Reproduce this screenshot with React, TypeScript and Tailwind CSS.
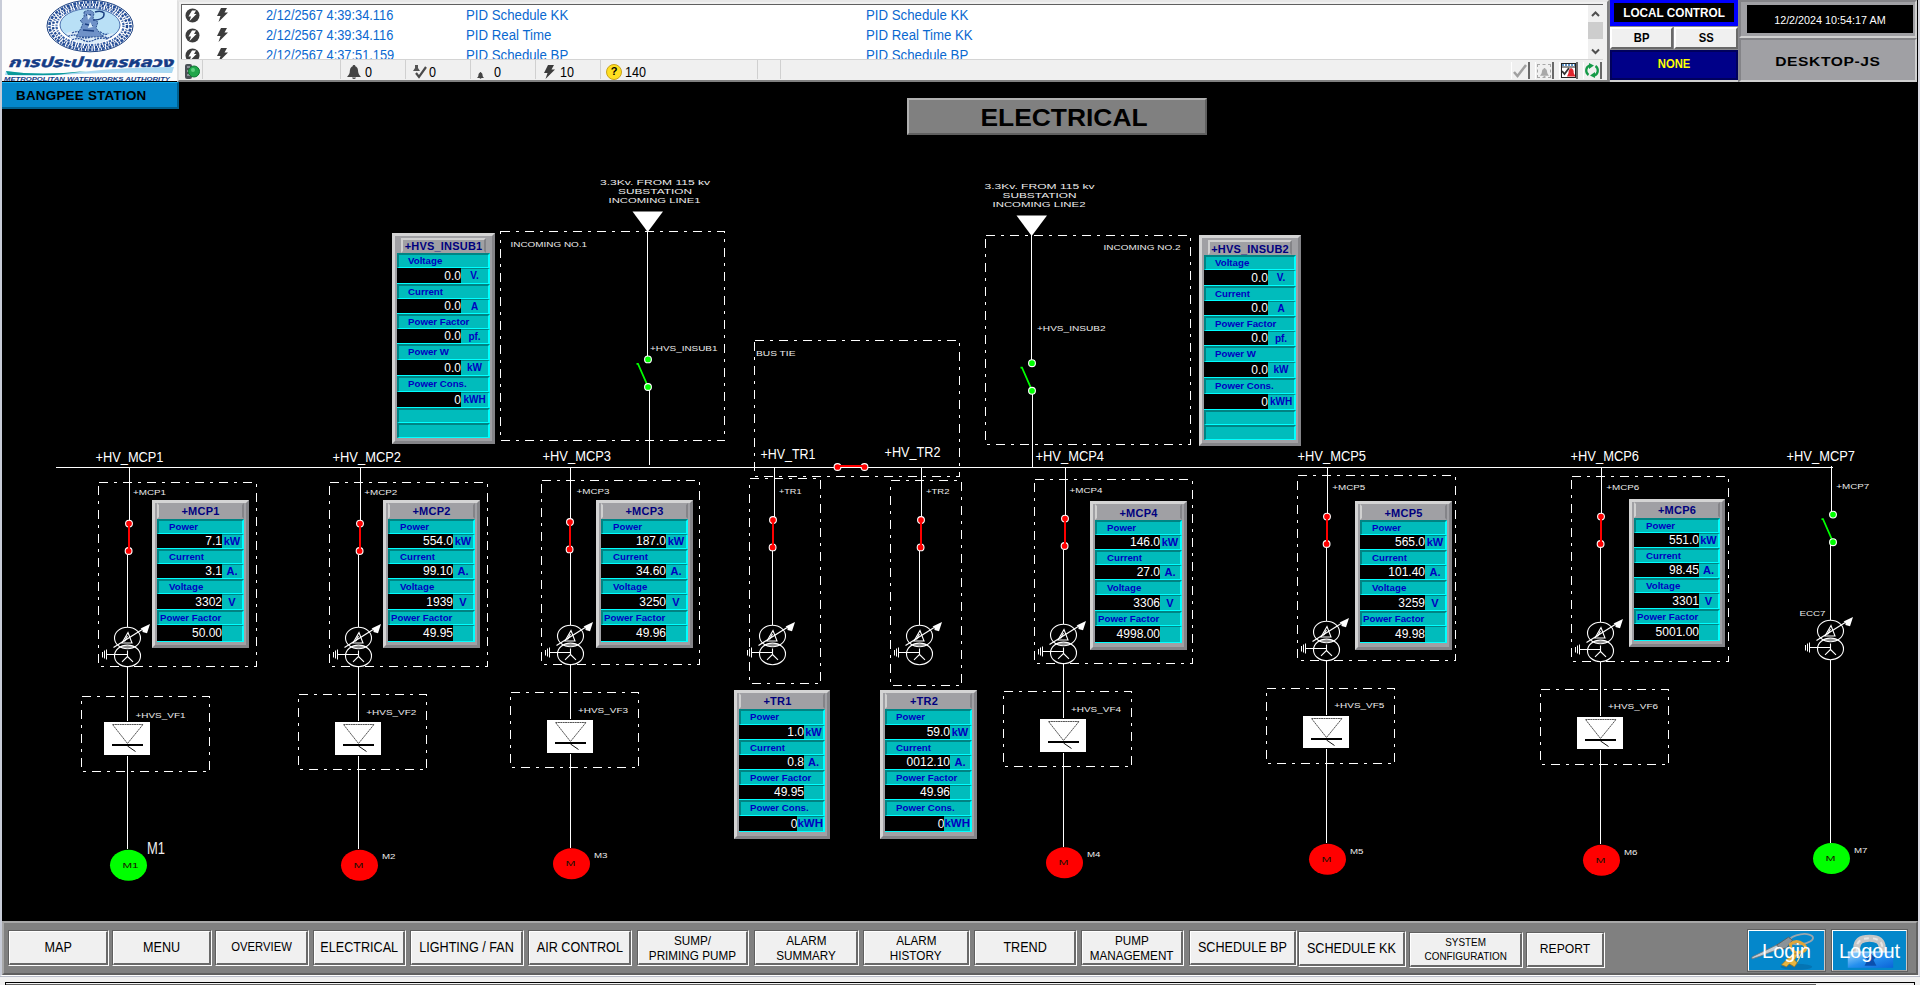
import React from "react";

/* ---------- shared drawing helpers (schematic coordinates) ---------- */

type LabelProps = { x: number; y: number; w: number; size?: number; fill?: string; children: string };

function Label({ x, y, w, size = 7, fill = "#ececec", children }: LabelProps) {
  return (
    <text x={x} y={y} fontSize={size} fill={fill} textLength={w} lengthAdjust="spacingAndGlyphs">
      {children}
    </text>
  );
}

function DashBox({ l, t, r, b }: { l: number; t: number; r: number; b: number }) {
  return (
    <rect
      x={l}
      y={t}
      width={r - l}
      height={b - t}
      fill="none"
      stroke="#fff"
      strokeDasharray="9 6 3 6"
      shapeRendering="crispEdges"
    />
  );
}

function VLine({ x, y1, y2 }: { x: number; y1: number; y2: number }) {
  return <line x1={x} x2={x} y1={y1} y2={y2} stroke="#fff" shapeRendering="crispEdges" />;
}

function Contact({ x, y, color }: { x: number; y: number; color: string }) {
  return <circle cx={x} cy={y} r={3.4} fill={color} stroke="#fff" strokeWidth={1.1} />;
}

function ClosedSwitch({ x, y }: { x: number; y: number }) {
  return (
    <g>
      <Contact x={x} y={y} color="#f00" />
      <Contact x={x - 0.4} y={y + 27.4} color="#f00" />
      <line x1={x} x2={x} y1={y} y2={y + 27} stroke="#f00" strokeWidth={2} shapeRendering="crispEdges" />
    </g>
  );
}

function OpenSwitch({ x, y }: { x: number; y: number }) {
  return (
    <g>
      <path d={`M${x - 11.5} ${y + 4.5}h1.5L${x - 1} ${y + 25}`} fill="none" stroke="#0f0" strokeWidth={1.7} />
      <Contact x={x} y={y} color="#0f0" />
      <Contact x={x} y={y + 27.6} color="#0f0" />
    </g>
  );
}

function Transformer({ x, dy }: { x: number; dy: number }) {
  return (
    <g transform={`translate(${x - 127.5} ${dy})`} fill="none" stroke="#fff" strokeWidth={1.1}>
      <ellipse cx="127.5" cy="638" rx="13" ry="10.8" />
      <ellipse cx="127.5" cy="655.9" rx="13" ry="10.8" />
      <path d="M128 632.5l-6 10.500h10zM127.5 636l-3 5.500" />
      <path d="M113.5 647.5L143 629" strokeWidth={1.2} />
      <path d="M150 624l-9.500 4.500 2 1 0 2.500 4.500 1.300z" fill="#fff" stroke="none" />
      <path d="M121 647h13" />
      <path d="M106.500 654.500H127.500M106.500 649.500v10M104.500 650.500v8M102.500 652v5.500" strokeWidth={1} />
      <path d="M127.500 650.500v6l-5.500 5.300M127.500 656.500l5.500 5.300" />
    </g>
  );
}

function Thyristor({ x, y, h = 33 }: { x: number; y: number; h?: number }) {
  return (
    <g>
      <rect x={x - 23.5} y={y} width={46} height={h} fill="#fff" />
      <path d={`M${x - 15} ${y + 2.5}h30.500L${x} ${y + 21.500}z`} fill="none" stroke="#555" strokeWidth={1} strokeDasharray="2 0.4" />
      <rect x={x - 15.5} y={y + 22} width={31} height={2} fill="#000" />
      <path d={`M${x} ${y + 24}l8 5.500`} stroke="#111" strokeWidth={1} />
    </g>
  );
}

function Motor({ x, y, color, name }: { x: number; y: number; color: string; name: string }) {
  const w = name.length > 1 ? 16 : 10;
  return (
    <g>
      <ellipse cx={x} cy={y} rx={18.5} ry={15.5} fill={color} />
      <Label x={x - 6} y={y + 2.7} w={w} size={8} fill="#1a1000">
        {name}
      </Label>
    </g>
  );
}

/* ---------- feeder columns ---------- */

type Feeder = {
  top: number;
  sw: [number, number];
  tx: number;
  dy: number;
  box: [number, number, number, number];
  vf: [number, number, number, number];
  drive: number;
  driveH: number;
  motor: [number, number, string, string];
  mcp: [number, number, string];
  vfl: [number, number, string];
};

const feeders: Feeder[] = [
  { top: 129.5, sw: [129, 523.6], tx: 127.5, dy: 0, box: [98.5, 482.5, 256.5, 666.5], vf: [81.5, 696.5, 209.5, 771.5], drive: 722, driveH: 33, motor: [128.5, 865.3, "#0f0", "M1"], mcp: [133, 495.3, "+MCP1"], vfl: [135.5, 718.3, "+HVS_VF1"] },
  { top: 360.5, sw: [360, 523.6], tx: 358.5, dy: 0, box: [329.5, 482.5, 487.5, 666.5], vf: [298.5, 694.5, 426.5, 769.5], drive: 722, driveH: 33, motor: [359.5, 865.3, "#f00", "M"], mcp: [364.3, 495.3, "+MCP2"], vfl: [366.3, 714.5, "+HVS_VF2"] },
  { top: 570.5, sw: [570, 522], tx: 570.5, dy: -2, box: [541.5, 480.5, 699.5, 664.5], vf: [510.5, 692.5, 638.5, 767.5], drive: 720, driveH: 33, motor: [571.5, 863.7, "#f00", "M"], mcp: [576.5, 493.5, "+MCP3"], vfl: [578, 712.5, "+HVS_VF3"] },
  { top: 1065.5, sw: [1065, 518.6], tx: 1063.5, dy: -3, box: [1034.5, 479.5, 1192.5, 663.5], vf: [1003.5, 691.5, 1131.5, 766.5], drive: 719, driveH: 33, motor: [1064.5, 862.7, "#f00", "M"], mcp: [1069.5, 492.5, "+MCP4"], vfl: [1071, 711.5, "+HVS_VF4"] },
  { top: 1327.5, sw: [1327, 516.6], tx: 1326.5, dy: -6, box: [1297.5, 475.5, 1455.5, 660.5], vf: [1266.5, 688.5, 1394.5, 763.5], drive: 716, driveH: 32, motor: [1327.5, 859.3, "#f00", "M"], mcp: [1332.3, 489.5, "+MCP5"], vfl: [1334.3, 707.5, "+HVS_VF5"] },
  { top: 1601.5, sw: [1601, 516.6], tx: 1600.5, dy: -5, box: [1571.5, 476.5, 1728.5, 661.5], vf: [1540.5, 689.5, 1668.5, 764.5], drive: 717, driveH: 32, motor: [1601.5, 860.3, "#f00", "M"], mcp: [1606.3, 489.5, "+MCP6"], vfl: [1608, 708.5, "+HVS_VF6"] },
];

function FeederColumn({ f }: { f: Feeder }) {
  return (
    <g>
      <DashBox l={f.box[0]} t={f.box[1]} r={f.box[2]} b={f.box[3]} />
      <DashBox l={f.vf[0]} t={f.vf[1]} r={f.vf[2]} b={f.vf[3]} />
      <VLine x={f.top} y1={468} y2={f.sw[1]} />
      <VLine x={f.tx} y1={f.sw[1] + 31} y2={627 + f.dy} />
      <VLine x={f.tx} y1={667 + f.dy} y2={f.drive - 1} />
      <VLine x={f.tx} y1={f.drive + f.driveH + 1} y2={f.motor[1] - 16} />
      <ClosedSwitch x={f.sw[0]} y={f.sw[1]} />
      <Transformer x={f.tx} dy={f.dy} />
      <Thyristor x={f.tx} y={f.drive} h={f.driveH} />
      <Motor x={f.motor[0]} y={f.motor[1]} color={f.motor[2]} name={f.motor[3]} />
      <Label x={f.mcp[0]} y={f.mcp[1]} w={33}>{f.mcp[2]}</Label>
      <Label x={f.vfl[0]} y={f.vfl[1]} w={50}>{f.vfl[2]}</Label>
    </g>
  );
}

function Schematic() {
  return (
    <svg viewBox="0 82 1920 839" width={1920} height={839} className="block" fontFamily="'Liberation Sans', Arial, sans-serif">
      <line x1={56} x2={1833} y1={467.5} y2={467.5} stroke="#fff" shapeRendering="crispEdges" />

      {/* incoming 1 */}
      <Label x={600} y={185} w={110}>3.3Kv. FROM 115 kv</Label>
      <Label x={618} y={194} w={74}>SUBSTATION</Label>
      <Label x={608.5} y={203} w={92}>INCOMING LINE1</Label>
      <DashBox l={500.5} t={231.5} r={724.5} b={440.5} />
      <path d="M632.500 211.500h30.500L647.700 232z" fill="#fff" />
      <Label x={510.5} y={247} w={76.5}>INCOMING NO.1</Label>
      <VLine x={647.5} y1={231} y2={357} />
      <VLine x={649.5} y1={389} y2={465} />
      <OpenSwitch x={648} y={359.4} />
      <Label x={650} y={351} w={67.5}>+HVS_INSUB1</Label>

      {/* incoming 2 */}
      <Label x={984.5} y={189} w={110}>3.3Kv. FROM 115 kv</Label>
      <Label x={1002.5} y={198} w={74}>SUBSTATION</Label>
      <Label x={992.5} y={207} w={93}>INCOMING LINE2</Label>
      <DashBox l={985.5} t={235.5} r={1190.5} b={444.5} />
      <path d="M1016.500 215.500h30.500L1031.700 236z" fill="#fff" />
      <Label x={1103.5} y={250} w={77}>INCOMING NO.2</Label>
      <VLine x={1031.5} y1={235} y2={360} />
      <VLine x={1032.5} y1={393} y2={467} />
      <OpenSwitch x={1032} y={363.2} />
      <Label x={1037} y={331} w={68.5}>+HVS_INSUB2</Label>

      {/* bus tie */}
      <DashBox l={754.5} t={340.5} r={959.5} b={476.5} />
      <Label x={756} y={355.7} w={39.5}>BUS TIE</Label>
      <Contact x={837.5} y={467} color="#f00" />
      <Contact x={864.5} y={467} color="#f00" />
      <rect x={836} y={465} width={29} height={2} fill="#f00" />

      {/* TR1 / TR2 */}
      <DashBox l={749.5} t={478.5} r={820.5} b={683.5} />
      <DashBox l={890.5} t={480.5} r={961.5} b={685.5} />
      <VLine x={774.5} y1={468} y2={520} />
      <VLine x={772.5} y1={551} y2={625} />
      <VLine x={921.5} y1={468} y2={520} />
      <VLine x={919.5} y1={551} y2={625} />
      <ClosedSwitch x={773} y={520} />
      <ClosedSwitch x={921} y={520} />
      <Transformer x={772.5} dy={-2} />
      <Transformer x={919.5} dy={-2} />
      <Label x={779} y={493.6} w={22.5}>+TR1</Label>
      <Label x={926} y={493.6} w={23.5}>+TR2</Label>

      {feeders.map((f) => (
        <FeederColumn key={f.mcp[2]} f={f} />
      ))}

      {/* feeder 7 */}
      <VLine x={1831.5} y1={466} y2={512} />
      <VLine x={1830.5} y1={545} y2={620} />
      <VLine x={1830.5} y1={660} y2={843} />
      <OpenSwitch x={1833} y={514.6} />
      <Transformer x={1830.5} dy={-7} />
      <Motor x={1831.5} y={858.5} color="#0f0" name="M" />
      <Label x={1799.5} y={615.7} w={26}>ECC7</Label>
      <Label x={1836.3} y={488.7} w={33}>+MCP7</Label>

      {/* bus labels */}
      <Label x={95.5} y={462} w={68} size={14} fill="#fff">+HV_MCP1</Label>
      <Label x={332.5} y={462} w={68.5} size={14} fill="#fff">+HV_MCP2</Label>
      <Label x={542.5} y={461} w={68.5} size={14} fill="#fff">+HV_MCP3</Label>
      <Label x={760.5} y={459} w={55} size={14} fill="#fff">+HV_TR1</Label>
      <Label x={884.5} y={457} w={56} size={14} fill="#fff">+HV_TR2</Label>
      <Label x={1035.5} y={461} w={68.5} size={14} fill="#fff">+HV_MCP4</Label>
      <Label x={1297.5} y={461} w={68.5} size={14} fill="#fff">+HV_MCP5</Label>
      <Label x={1570.5} y={461} w={68.5} size={14} fill="#fff">+HV_MCP6</Label>
      <Label x={1786.5} y={461} w={68.5} size={14} fill="#fff">+HV_MCP7</Label>

      {/* motor labels */}
      <Label x={147} y={854} w={18} size={16} fill="#eee">M1</Label>
      <Label x={382} y={859.3} w={13.5}>M2</Label>
      <Label x={594} y={857.5} w={13.5}>M3</Label>
      <Label x={1087} y={856.5} w={13.5}>M4</Label>
      <Label x={1350} y={853.5} w={13.5}>M5</Label>
      <Label x={1624} y={854.5} w={13.5}>M6</Label>
      <Label x={1854} y={852.6} w={13.5}>M7</Label>
    </svg>
  );
}

/* ---------- meter panels ---------- */

type Row = { label: string; value: string; unit: string; indent?: string; lh: string; vh: string };

function Meter({ place, title, rows, wide, titlePad = "pt-0", blanks = 0 }: { place: string; title: string; rows: Row[]; wide?: boolean; titlePad?: string; blanks?: number }) {
  return (
    <section className={`absolute flex flex-col border-[3px] border-t-[#d4d4d4] border-l-[#d4d4d4] border-r-[#848488] border-b-[#848488] bg-[#a0a0a4] ${wide ? "px-[2px] pt-[2px]" : "px-[2px]"} ${place}`}>
      <h2
        className={`flex shrink-0 items-center justify-center whitespace-nowrap border-2 border-l-[#d0d0d0] border-r-[#848488] border-b-transparent text-[11px] font-bold leading-none text-[#00007e] tracking-[0.2px] ${
          wide ? "mx-1 h-[15px] border-t-[#d0d0d0]" : "h-4 border-t-transparent"
        } ${titlePad}`}
      >
        {title}
      </h2>
      {rows.map((r) => (
        <div key={r.label} className="shrink-0">
          <div className={`flex items-center whitespace-nowrap border-t-2 border-r-2 border-b border-l-2 border-t-[#008484] border-l-[#008484] border-r-[#0ff] border-b-[#0ff] bg-[#00bcbc] pb-[1px] text-[9.7px] font-bold leading-none text-[#0000c0] ${r.lh} ${r.indent ?? "pl-[9px]"}`}>
            {r.label}
          </div>
          <div className={`flex border-b border-b-[#0ff] ${r.vh}`}>
            <div className={`flex items-center justify-end bg-black text-[12px] leading-none text-white ${wide ? "w-[64px]" : "w-[65px]"}`}>{r.value}</div>
            <div className={`flex flex-1 items-center whitespace-nowrap border-t border-r-2 border-t-[#008484] border-r-[#0ff] bg-[#00bcbc] font-bold leading-none text-[#0000c0] ${wide ? "justify-center text-[10px]" : r.unit === "kWH" ? "text-[11.5px]" : "justify-center text-[11px]"}`}>
              <span>{r.unit}</span>
            </div>
          </div>
        </div>
      ))}
      {Array.from({ length: blanks }, (_, i) => (
        <div key={i} className="h-[15px] shrink-0 border-t-2 border-r-2 border-b border-l-2 border-t-[#008484] border-l-[#008484] border-r-[#0ff] border-b-[#0ff] bg-[#00bcbc]" />
      ))}
    </section>
  );
}

const insubRows: Row[] = [
  { label: "Voltage", value: "0.0", unit: "V.", lh: "h-[15px]", vh: "h-4" },
  { label: "Current", value: "0.0", unit: "A", lh: "h-[15px]", vh: "h-[15px]" },
  { label: "Power Factor", value: "0.0", unit: "pf.", lh: "h-[15px]", vh: "h-[15px]" },
  { label: "Power W", value: "0.0", unit: "kW", lh: "h-4", vh: "h-4" },
  { label: "Power Cons.", value: "0", unit: "kWH", lh: "h-4", vh: "h-4" },
];

const mcpRows = (p: string, c: string, v: string, pf: string): Row[] => [
  { label: "Power", value: p, unit: "kW", lh: "h-[15px]", vh: "h-[15px]", indent: "pl-[10px]" },
  { label: "Current", value: c, unit: "A.", lh: "h-[15px]", vh: "h-[15px]", indent: "pl-[10px]" },
  { label: "Voltage", value: v, unit: "V", lh: "h-[15px]", vh: "h-4", indent: "pl-[10px]" },
  { label: "Power Factor", value: pf, unit: "", indent: "pl-[1px]", lh: "h-[15px]", vh: "h-[17px]" },
];

const trRows = (p: string, c: string, pf: string): Row[] => [
  { label: "Power", value: p, unit: "kW", lh: "h-4", vh: "h-[15px]" },
  { label: "Current", value: c, unit: "A.", lh: "h-[15px]", vh: "h-[15px]" },
  { label: "Power Factor", value: pf, unit: "", lh: "h-[15px]", vh: "h-[15px]" },
  { label: "Power Cons.", value: "0", unit: "kWH", lh: "h-4", vh: "h-4" },
];

/* ---------- header ---------- */

function Logo() {
  return (
    <svg width={175} height={81} viewBox="2 0 175 81" className="block bg-[#fdfdfd]">
      <ellipse cx="90" cy="26" rx="43" ry="25.800" fill="#fff" stroke="#1a3f80" strokeWidth="1" />
      <ellipse cx="90" cy="26" rx="40.500" ry="23.800" fill="none" stroke="#27509a" strokeWidth="2.600" strokeDasharray="1.600 1.200 3 0.900" />
      <ellipse cx="90" cy="26" rx="37" ry="21.300" fill="none" stroke="#1f4790" strokeWidth="2.400" strokeDasharray="2.200 1.400 1 1" />
      <ellipse cx="90" cy="26" rx="33.500" ry="19" fill="none" stroke="#3a62a8" strokeWidth="2.200" strokeDasharray="1.200 1.300 2.500 1" />
      <ellipse cx="90" cy="25" rx="30" ry="16.500" fill="#b9e0f6" stroke="#27509a" strokeWidth="0.800" />
      <path d="M66 33q12-4 24 0t24 0q-6 10-24 11-18-1-24-11z" fill="#dcecf8" />
      <path d="M72 33q6-3 10 0t10 0 10 0 6 0M68 36.500q6-3 12 0t12 0 12 0 8-1M72 40q6-3 11 0t11 0 14-1" fill="none" stroke="#27509a" strokeWidth="1.300" strokeDasharray="2 0.900" />
      <path d="M84 12q6-4 10 1l-1 6 5 3-2 6 7 9H76l5-9 2-5-3-2 4-4z" fill="#6f92c8" stroke="#1a3f80" strokeWidth="0.800" strokeDasharray="2 1" />
      <path d="M93 20q12 0 11-7-3-3-9-1M86 15h5M85 24l8 2M83 30l11 1" fill="none" stroke="#1a3f80" strokeWidth="1.400" />
      <path d="M87 14l4 2-3 4zM90 22l3 5-5 1z" fill="#d8ecfa" />
      <text x="8" y="66.500" fontSize="14" fontWeight="700" fontStyle="italic" fill="#143c86" stroke="#143c86" strokeWidth="0.400" fontFamily="'Noto Sans Thai', 'Noto Sans', 'Liberation Sans', sans-serif" textLength="165" lengthAdjust="spacingAndGlyphs">
        การประปานครหลวง
      </text>
      <path d="M6 71q30 5 75 1 45-5 93-5l-2 6q-60-1-95 1-40 3-72 1z" fill="#a9d8f2" />
      <path d="M6 71q34 5 80 0-20 3-32 4H8z" fill="#0a9a9a" />
      <text x="4" y="80.500" fontSize="6" fontWeight="700" fontStyle="italic" fill="#143c86" fontFamily="'Liberation Sans', Arial, sans-serif" textLength="166" lengthAdjust="spacingAndGlyphs">
        METROPOLITAN WATERWORKS AUTHORITY
      </text>
    </svg>
  );
}

const Bolt = ({ className = "" }: { className?: string }) => (
  <svg width={12} height={14} viewBox="0 0 12 14" className={className}>
    <path d="M5 0h6L8.500 4.500H12L2.500 14 4.500 8H1z" fill="#3c3c3c" />
  </svg>
);

const CircleBolt = () => (
  <svg width={15} height={15} viewBox="0 0 15 15">
    <circle cx="7.500" cy="7.500" r="7" fill="#3c3c3c" />
    <path d="M7 2.500h4L9 6h2.500L4.500 13 6 8.500H3.500z" fill="#fff" />
  </svg>
);

const Bell = ({ w, h, fill = "#444" }: { w: number; h: number; fill?: string }) => (
  <svg width={w} height={h} viewBox="0 0 14 14" preserveAspectRatio="none">
    <path d="M7 0c1 0 1.500.7 1.500 1.500C11 2.200 11 5 11.300 7.500 11.600 9.500 13 10.500 14 12H0c1-1.500 2.400-2.500 2.700-4.500C3 5 3 2.200 5.500 1.500 5.500.7 6 0 7 0zM5 12.500h4Q8.500 14 7 14T5 12.500z" fill={fill} />
  </svg>
);

function EventRow({ time, a, b }: { time: string; a: string; b: string }) {
  return (
    <div className="flex h-[20px] shrink-0 items-center text-[14px] leading-none text-[#0a68d0]">
      <span className="w-[32px] pl-[3px]"><CircleBolt /></span>
      <span className="w-[52px] pl-[2px]"><Bolt /></span>
      <span className="w-[200px] whitespace-nowrap"><span className="inline-block origin-left scale-x-[0.915]">{time}</span></span>
      <span className="w-[400px] whitespace-nowrap"><span className="inline-block origin-left scale-x-[0.945]">{a}</span></span>
      <span className="whitespace-nowrap"><span className="inline-block origin-left scale-x-[0.945]">{b}</span></span>
    </div>
  );
}

function StatusCell({ w, children }: { w: string; children?: React.ReactNode }) {
  return (
    <div className={`flex h-full items-center border-l border-l-[#d0d0d0] pt-[4px] text-[14px] leading-none text-black ${w}`}>
      {children}
    </div>
  );
}

const Count = ({ children }: { children: string }) => <span className="inline-block origin-left scale-x-90">{children}</span>;

function ToolIcon({ gap = "", children }: { gap?: string; children: React.ReactNode }) {
  return <div className={`mt-[2px] flex h-[17px] w-[19px] items-center justify-center border-r-2 border-r-[#696969] border-l border-l-white ${gap}`}>{children}</div>;
}

function EventViewer() {
  return (
    <div className="flex h-[82px] w-[1432px] flex-col border-2 border-t-[#e8e8e8] border-l-[#e0e0e0] border-r-[#808080] border-b-[#808080] bg-[#f0f0f0] pl-[2px] pr-[4px] pt-[2px]">
      <div className="flex h-[55px] border-t border-l border-t-[#606060] border-l-[#606060] bg-white">
        <div className="flex flex-1 flex-col overflow-hidden">
          <EventRow time="2/12/2567 4:39:34.116" a="PID Schedule KK" b="PID Schedule KK" />
          <EventRow time="2/12/2567 4:39:34.116" a="PID Real Time" b="PID Real Time KK" />
          <EventRow time="2/12/2567 4:37:51.159" a="PID Schedule BP" b="PID Schedule BP" />
        </div>
        <div className="flex w-[15px] flex-col items-center bg-[#f0f0f0]">
          <svg width={15} height={17} viewBox="0 0 15 17"><path d="M4 11l3.500-3.500L11 11" fill="none" stroke="#505050" strokeWidth={2} /></svg>
          <div className="h-[17px] w-full bg-[#cdcdcd]" />
          <svg width={15} height={18} viewBox="0 0 15 18" className="mt-[2px]"><path d="M4 8.500L7.500 12 11 8.500" fill="none" stroke="#505050" strokeWidth={2} /></svg>
        </div>
      </div>
      <div className="flex h-[20px] items-center border-t border-t-[#d4d4d4]">
        <div className="flex h-full w-[21px] items-center pl-[4px] pt-[3px]">
          <svg width={15} height={15} viewBox="0 0 15 15">
            <rect x="0" y="0" width="7" height="15" rx="2" fill="#4b5157" />
            <path d="M2 3h3M2 7h3M2 11h3" stroke="#8a9298" strokeWidth={2} />
            <circle cx="9" cy="7.500" r="5.500" fill="#1fa64a" stroke="#0c7a31" />
            <circle cx="8" cy="6" r="2" fill="#5fd07f" />
          </svg>
        </div>
        <StatusCell w="w-[138px]" />
        <StatusCell w="w-[65px] pl-[6px] gap-[4px]"><Bell w={14} h={14} /><Count>0</Count></StatusCell>
        <StatusCell w="w-[65px] pl-[6px] gap-[2px]">
          <svg width={15} height={14} viewBox="0 0 15 14"><path d="M3 0h3v3l2 3H1l2-3z" fill="#555" /><path d="M4 8l3 4 7-10" fill="none" stroke="#4a4a4a" strokeWidth={2.2} /></svg><Count>0</Count>
        </StatusCell>
        <StatusCell w="w-[65px] pl-[6px]"><span className="mr-[10px] self-end"><Bell w={7} h={7} /></span><Count>0</Count></StatusCell>
        <StatusCell w="w-[65px] pl-[7px] gap-[5px]"><Bolt /><Count>10</Count></StatusCell>
        <StatusCell w="w-[157px] pl-[5px] gap-[3px]">
          <span className="flex size-4 items-center justify-center rounded-full border border-[#c9a21a] bg-[#ffdf20] text-[11px] font-bold text-black">?</span><Count>140</Count>
        </StatusCell>
        <StatusCell w="w-[23px]" />
        <StatusCell w="flex-1" />
        <ToolIcon><svg width={14} height={14} viewBox="0 0 14 14"><path d="M1 8l3.500 4L13 1" fill="none" stroke="#a0a0a0" strokeWidth={2.5} /></svg></ToolIcon>
        <ToolIcon gap="ml-[5px]">
          <span className="flex size-[14px] items-end justify-center border border-dashed border-[#a8a8a8]"><Bell w={9} h={9} fill="#a8a8a8" /></span>
        </ToolIcon>
        <ToolIcon gap="ml-[5px]">
          <svg width={15} height={15} viewBox="0 0 15 15"><rect x=".5" y=".5" width="14" height="14" fill="#fff" stroke="#222" /><path d="M1 2h13" stroke="#2a6fb0" strokeWidth={1.5} strokeDasharray="2 1" /><path d="M0 4h15" stroke="#222" /><path d="M1 8l2.500 3L8 5" fill="none" stroke="#333" strokeWidth={1.8} /><path d="M10 5q3 1 2.700 5l1.800 3.500H6L7.500 10Q7.500 6 10 5z" fill="#e0242c" /></svg>
        </ToolIcon>
        <ToolIcon gap="ml-[5px] mr-[1px]">
          <svg width={16} height={15} viewBox="0 0 16 15"><path d="M4.500 12A5.500 5.500 0 0 1 5.500 2.500M11.500 3a5.500 5.500 0 0 1-1 9.500" fill="none" stroke="#159a48" strokeWidth={2.3} /><path d="M5 0l5 2.500L5 6zM11 9v6l-5-2.500z" fill="#159a48" /></svg>
        </ToolIcon>
      </div>
    </div>
  );
}

function ControlBlock() {
  return (
    <div className="flex h-[82px] w-[130px] flex-col bg-[#8a8a8e] px-[1px] text-[12.5px] font-bold leading-none">
      <div className="flex h-[26px] items-center justify-center border-4 border-t-[3px] border-[#0000ff] bg-black pt-[1px] text-white">
        <span className="scale-x-[0.94] whitespace-nowrap">LOCAL CONTROL</span>
      </div>
      <div className="mt-[1px] flex h-[22px] gap-[1px]">
        <div className="flex w-[63px] items-center justify-center border-2 border-t-white border-l-white border-r-[#696969] border-b-[#696969] bg-[#f0f0f0] pt-[1px] text-black"><span className="scale-x-90">BP</span></div>
        <div className="flex flex-1 items-center justify-center border-2 border-t-white border-l-white border-r-[#696969] border-b-[#696969] bg-[#f0f0f0] pt-[1px] text-black"><span className="scale-x-90">SS</span></div>
      </div>
      <div className="mt-[1px] flex h-[30px] items-center justify-center border-2 border-[#00005c] bg-[#000088] pb-[2px] text-[#ffff00]">
        <span className="scale-x-[0.9]">NONE</span>
      </div>
      <div className="h-[2px] bg-[#d0d0d0]" />
    </div>
  );
}

function ClockBlock() {
  return (
    <div className="flex h-[82px] w-[178px] flex-col bg-[#a0a0a4] leading-none">
      <div className="flex h-[38px] border-2 border-t-[#848488] border-l-[#848488] border-r-[#d0d0d0] border-b-[#d0d0d0] pl-[6px] pr-[2px] pt-[3px] pb-[3px]">
        <div className="flex flex-1 items-center justify-center bg-black text-[11px] text-white">
          <span className="scale-x-[0.98] whitespace-nowrap pt-[2px]">12/2/2024 10:54:17 AM</span>
        </div>
      </div>
      <div className="flex flex-1 items-center justify-center border-2 border-t-[#848488] border-l-[#848488] border-r-[#d0d0d0] border-b-[#d0d0d0] text-[13px] font-bold text-black">
        <span className="scale-x-[1.2] whitespace-nowrap pt-[2px] tracking-[0.5px]">DESKTOP-JS</span>
      </div>
    </div>
  );
}

/* ---------- footer ---------- */

type Nav = { lines: string[]; box: string; text?: string };

const nav: Nav[] = [
  { lines: ["MAP"], box: "w-[101px] h-9" },
  { lines: ["MENU"], box: "w-[100px] h-9 ml-[3px]" },
  { lines: ["OVERVIEW"], box: "w-[94px] h-9 ml-[3px]", text: "text-[12.5px] leading-none" },
  { lines: ["ELECTRICAL"], box: "w-[93px] h-9 ml-1" },
  { lines: ["LIGHTING / FAN"], box: "w-[114px] h-9 ml-1" },
  { lines: ["AIR CONTROL"], box: "w-[104px] h-9 ml-1" },
  { lines: ["SUMP/", "PRIMING PUMP"], box: "w-[112px] h-9 ml-[5px]", text: "text-[13px] leading-[15px]" },
  { lines: ["ALARM", "SUMMARY"], box: "w-[105px] h-9 ml-[5px]", text: "text-[13px] leading-[15px]" },
  { lines: ["ALARM", "HISTORY"], box: "w-[107px] h-9 ml-1", text: "text-[13px] leading-[15px]" },
  { lines: ["TREND"], box: "w-[103px] h-9 ml-1" },
  { lines: ["PUMP", "MANAGEMENT"], box: "w-[103px] h-9 ml-1", text: "text-[13px] leading-[15px]" },
  { lines: ["SCHEDULE BP"], box: "w-[108px] h-9 ml-[5px]" },
  { lines: ["SCHEDULE KK"], box: "w-[108px] h-9 ml-[1px] mt-[1px]" },
  { lines: ["SYSTEM", "CONFIGURATION"], box: "w-[114px] h-9 ml-[3px] mt-[2px]", text: "text-[11px] leading-[14px] pb-[1px]" },
  { lines: ["REPORT"], box: "w-[79px] h-9 ml-[3px] mt-[2px]", text: "text-[13.5px] leading-none pb-[2px]" },
];

function NavButton({ lines, box, text = "text-[14px] leading-none pb-[1px]" }: Nav) {
  return (
    <button className={`flex shrink-0 border border-t-[#606060] border-l-[#606060] border-r-white border-b-white ${box}`}>
      <span className={`flex size-full flex-col items-center justify-center border-2 border-t border-l border-t-white border-l-white border-r-[#696969] border-b-[#696969] bg-[#f0f0f0] text-black ${text}`}>
        {lines.map((l) => (
          <span key={l} className="scale-x-90 whitespace-nowrap">{l}</span>
        ))}
      </span>
    </button>
  );
}

function IconButton({ box, label, children }: { box: string; label: string; children: React.ReactNode }) {
  return (
    <button className={`relative flex shrink-0 items-center justify-center border border-[#606060] p-0 ${box}`}>
      <span className="relative flex size-full items-center justify-center overflow-hidden border border-t-white border-l-white border-r-[#c8c8c8] border-b-[#a0a0a0] bg-[#0487cb]">
        {children}
        <span className="absolute whitespace-nowrap text-[20px] leading-none text-white">{label}</span>
      </span>
    </button>
  );
}

function Footer() {
  return (
    <footer className="flex h-[54px] shrink-0 items-start border-2 border-t-[#a8a8a8] border-l-[#a8a8a8] border-r-[#606060] border-b-[#606060] bg-[#808080] pl-[4px] pt-[7px]">
      {nav.map((n) => (
        <NavButton key={n.lines.join(" ")} {...n} />
      ))}
      <IconButton box="-mt-[1px] ml-[142px] h-[43px] w-[79px]" label="Login">
        <svg width={76} height={40} viewBox="0 0 76 40">
          <ellipse cx="53" cy="8" rx="12" ry="5" fill="none" stroke="#9aa6ad" strokeWidth={1.8} transform="rotate(-8 53 8)" />
          <ellipse cx="48" cy="36" rx="16" ry="3" fill="#0568a4" opacity=".6" />
          <path d="M3 26L30 13l3 4-21 8-9 3z" fill="#c6cdd1" stroke="#6c757b" strokeWidth={0.8} />
          <path d="M28 14l12-8 4 3-6 8-6 1z" fill="#8b9398" stroke="#5a6267" />
          <path d="M42 13q6-5 13 0 5 4 1 7l-7 2q-7-1-7-9z" fill="none" stroke="#dfa53a" strokeWidth={3} />
          <path d="M44 23l-11 11 5 2 3-3 5 3 3-4-3-3 4-6z" fill="#eab540" stroke="#a87718" strokeWidth={0.8} />
          <path d="M57 15l-8 16" stroke="#f5d88a" strokeWidth={1.2} />
        </svg>
      </IconButton>
      <IconButton box="-mt-[1px] ml-[5px] h-[43px] w-[77px]" label="Logout">
        <svg width={74} height={40} viewBox="0 0 74 40">
          <defs>
            <linearGradient id="lockBody" x1="0" y1="0" x2="1" y2="1">
              <stop offset="0" stopColor="#9fd6fb" />
              <stop offset=".5" stopColor="#2590ee" />
              <stop offset="1" stopColor="#0a63d8" />
            </linearGradient>
          </defs>
          <path d="M24 22v-5q0-10 13-10t13 10v5" fill="none" stroke="#c6c6c6" strokeWidth={7} />
          <path d="M24 22v-5q0-10 13-10t13 10v5" fill="none" stroke="#e6e6e6" strokeWidth={2} strokeDasharray="5 4" />
          <rect x="15" y="21" width="46" height="16" fill="url(#lockBody)" />
          <path d="M15 21h46" stroke="#dff1ff" />
          <path d="M38 22l5 5-2 2 3 6H32l3-6-2-2z" fill="#0a4fae" />
        </svg>
      </IconButton>
    </footer>
  );
}

export default function App() {
  return (
    <div className="flex h-[985px] w-[1920px] flex-col overflow-hidden bg-[#f0f0f0] font-['Liberation_Sans',Arial,sans-serif]">
      <div className="flex h-[976px] shrink-0 flex-col border-l-2 border-r-2 border-b border-l-[#c8ccd8] border-r-[#d8d8e0] border-b-white bg-black">
        <header className="flex h-[82px] shrink-0 overflow-hidden">
          <div className="w-[175px] shrink-0"><Logo /></div>
          <EventViewer />
          <ControlBlock />
          <ClockBlock />
        </header>

        <main className="relative h-[839px] shrink-0 overflow-hidden">
          <div className="-ml-[2px] w-[1920px]"><Schematic /></div>

          <div className="absolute left-0 -top-[1px] flex h-[28px] w-[177px] items-center border-t-2 border-r-2 border-b-2 border-t-[#18b4f4] border-r-[#00608f] border-b-[#00608f] bg-[#0487cb] pl-[14px] pt-[2px] text-[13.4px] font-bold leading-none tracking-[0.25px] text-black">
            BANGPEE STATION
          </div>

          <h1 className="absolute left-[905px] top-[16px] flex h-[37px] w-[300px] items-center justify-center border-2 border-t-[#b0b0b0] border-l-[#b0b0b0] border-r-[#606060] border-b-[#606060] bg-[#808080] pl-[14px] pt-[3px] text-[24px] font-bold leading-none text-black">
            <span className="scale-x-[1.1]">ELECTRICAL</span>
          </h1>

          <Meter place="left-[390px] top-[151px] w-[103px] h-[211px]" title="+HVS_INSUB1" titlePad="pt-[2px]" rows={insubRows} wide blanks={2} />
          <Meter place="left-[1197px] top-[153px] w-[102px] h-[211px]" title="+HVS_INSUB2" titlePad="pt-[3px]" rows={insubRows} wide blanks={2} />
          <Meter place="left-[150px] top-[418px] w-[97px] h-[148px]" title="+MCP1" rows={mcpRows("7.1", "3.1", "3302", "50.00")} />
          <Meter place="left-[381px] top-[418px] w-[97px] h-[148px]" title="+MCP2" rows={mcpRows("554.0", "99.10", "1939", "49.95")} />
          <Meter place="left-[594px] top-[418px] w-[97px] h-[148px]" title="+MCP3" rows={mcpRows("187.0", "34.60", "3250", "49.96")} />
          <Meter place="left-[1088px] top-[419px] w-[97px] h-[149px]" title="+MCP4" titlePad="pt-[2px]" rows={mcpRows("146.0", "27.0", "3306", "4998.00")} />
          <Meter place="left-[1353px] top-[419px] w-[97px] h-[149px]" title="+MCP5" titlePad="pt-[2px]" rows={mcpRows("565.0", "101.40", "3259", "49.98")} />
          <Meter place="left-[1627px] top-[417px] w-[96px] h-[148px]" title="+MCP6" rows={mcpRows("551.0", "98.45", "3301", "5001.00")} />
          <Meter place="left-[732px] top-[608px] w-[96px] h-[149px]" title="+TR1" titlePad="pt-[1px] pr-[9px]" rows={trRows("1.0", "0.8", "49.95")} />
          <Meter place="left-[878px] top-[608px] w-[97px] h-[149px]" title="+TR2" titlePad="pt-[1px] pr-[9px]" rows={trRows("59.0", "0012.10", "49.96")} />
        </main>

        <Footer />
      </div>
      <div className="h-[1px] shrink-0 bg-[#b8bcc8]" />
      <div className="mx-[5px] mt-[5px] h-[1px] shrink-0 bg-black" />
      <div className="mx-[5px] flex h-[2px] shrink-0 flex-col border-l border-r border-black bg-[#f0f0f0]">
        <div className="mt-[1px] h-[1px] w-[1810px] bg-[#606060]" />
      </div>
    </div>
  );
}
